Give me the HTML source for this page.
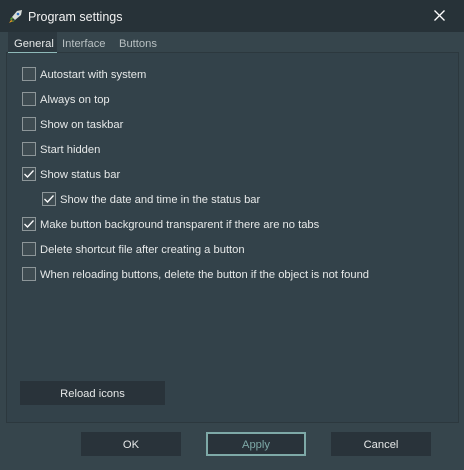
<!DOCTYPE html><html><head><style>
body{margin:0;width:464px;height:470px;background:#36454c;font-family:"Liberation Sans",sans-serif;font-size:11.2px;color:#e6e8e8;position:relative;overflow:hidden}
.a{position:absolute}
.tb{left:0;top:0;width:464px;height:32px;background:#273238}
.panel{left:6px;top:52px;width:451px;height:369px;background:#33424a;border:1px solid #2c383e}
.cb{position:absolute;width:12px;height:12px;border:1px solid #8d9699;background:#3e4b51}
.cb svg{position:absolute;left:0;top:0}
.lb{position:absolute;white-space:nowrap}
.btn{position:absolute;background:#29333a;text-align:center;line-height:24px;height:24px}
</style></head><body>
<div class="a tb"></div>
<svg class="a" style="left:8px;top:8px" width="16" height="16" viewBox="0 0 16 16"><path d="M14 2 L9 3 L4 9 L7 12 L13 7Z" fill="#d8dcd8"/><path d="M4 9 L2 11 L3 12 L5 11Z M7 12 L5 14 L4 13Z" fill="#5aa030"/><path d="M3 12 L1 15 L5 13Z" fill="#e8a020"/><circle cx="10" cy="6" r="1.3" fill="#3070c0"/></svg>
<div class="lb" style="left:28px;top:10px;font-size:12.5px;color:#f2f2f2">Program settings</div>
<svg class="a" style="left:434px;top:10px" width="11" height="11"><path d="M0.5 0.5L10.5 10.5M10.5 0.5L0.5 10.5" stroke="#fff" stroke-width="1.3"/></svg>
<div class="a panel"></div>
<div class="a" style="left:8px;top:32px;width:49px;height:20px;background:#2c383f;border-bottom:1px solid #8fb9b8"></div>
<div class="lb" style="left:14px;top:38px">General</div>
<div class="lb" style="left:62px;top:38px;color:#b8c0c2">Interface</div>
<div class="lb" style="left:119px;top:38px;color:#b8c0c2">Buttons</div>

<div class="cb" style="left:22px;top:67px"></div><div class="lb" style="left:40px;top:69px">Autostart with system</div>
<div class="cb" style="left:22px;top:92px"></div><div class="lb" style="left:40px;top:94px">Always on top</div>
<div class="cb" style="left:22px;top:117px"></div><div class="lb" style="left:40px;top:119px">Show on taskbar</div>
<div class="cb" style="left:22px;top:142px"></div><div class="lb" style="left:40px;top:144px">Start hidden</div>
<div class="cb" style="left:22px;top:167px"><svg width="12" height="12"><path d="M1.5 6L4.5 9L10.5 2.5" stroke="#fff" stroke-width="1.3" fill="none"/></svg></div><div class="lb" style="left:40px;top:169px">Show status bar</div>
<div class="cb" style="left:42px;top:192px"><svg width="12" height="12"><path d="M1.5 6L4.5 9L10.5 2.5" stroke="#fff" stroke-width="1.3" fill="none"/></svg></div><div class="lb" style="left:60px;top:194px">Show the date and time in the status bar</div>
<div class="cb" style="left:22px;top:217px"><svg width="12" height="12"><path d="M1.5 6L4.5 9L10.5 2.5" stroke="#fff" stroke-width="1.3" fill="none"/></svg></div><div class="lb" style="left:40px;top:219px">Make button background transparent if there are no tabs</div>
<div class="cb" style="left:22px;top:242px"></div><div class="lb" style="left:40px;top:244px">Delete shortcut file after creating a button</div>
<div class="cb" style="left:22px;top:267px"></div><div class="lb" style="left:40px;top:269px">When reloading buttons, delete the button if the object is not found</div>

<div class="btn" style="left:20px;top:381px;width:145px;line-height:26px">Reload icons</div>
<div class="btn" style="left:81px;top:432px;width:100px;line-height:26px">OK</div>
<div class="btn" style="left:206px;top:432px;width:96px;height:20px;line-height:22px;border:2px solid #7ea9a7;color:#7ea9a7">Apply</div>
<div class="btn" style="left:331px;top:432px;width:100px;line-height:26px">Cancel</div>
</body></html>
